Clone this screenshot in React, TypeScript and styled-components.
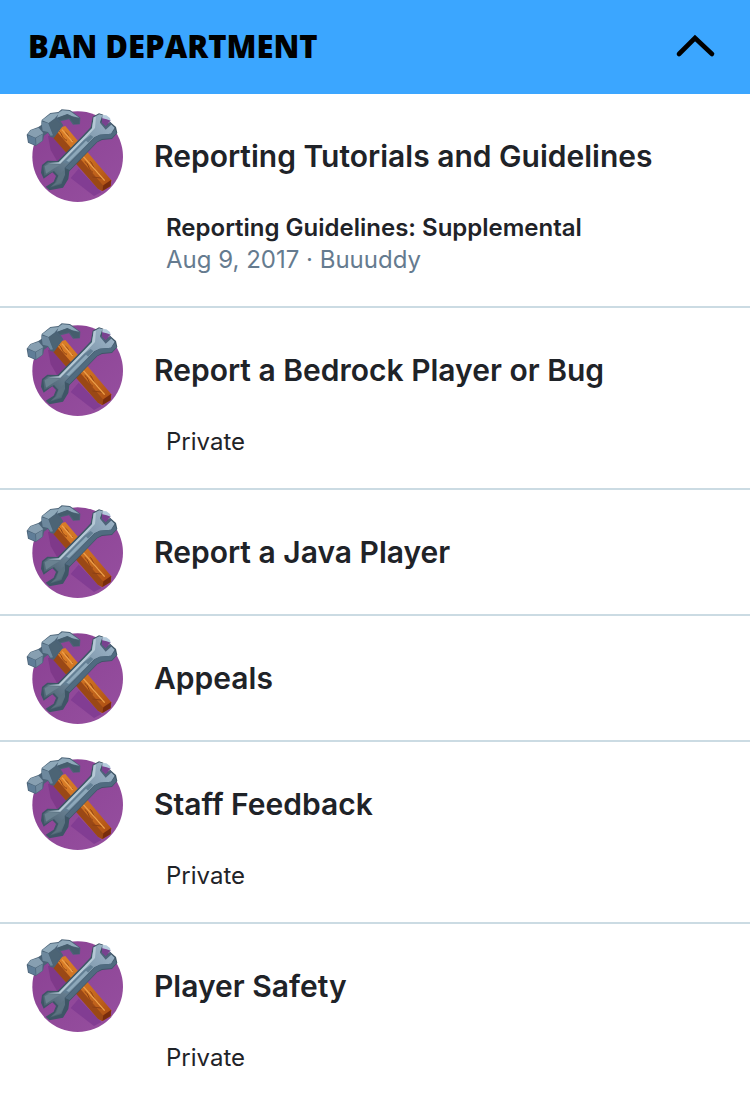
import React, { useState } from "react";
import styled, { createGlobalStyle } from "styled-components";

const GlobalStyle = createGlobalStyle`
  *, *::before, *::after { box-sizing: border-box; }
  body {
    margin: 0;
    background: #fff;
    color: #1f2328;
    font-family: Inter, "Liberation Sans", sans-serif;
  }
`;

const Heading = styled.h2`
  margin: 0;
`;

const HeaderButton = styled.button`
  display: flex;
  align-items: center;
  justify-content: space-between;
  width: 100%;
  height: 94px;
  padding: 0 34px 2px 28px;
  border: 0;
  background: #3ba6ff;
  color: #000;
  font-family: "Open Sans", Inter, sans-serif;
  font-size: 31px;
  font-weight: 800;
  line-height: 36px;
  text-align: left;
  text-transform: uppercase;
  cursor: pointer;
`;

const Chevron = styled.svg<{ $open: boolean }>`
  flex: none;
  transform: ${(p) => (p.$open ? "none" : "rotate(180deg)")};
`;

const List = styled.ul`
  margin: 0;
  padding: 0;
  list-style: none;
`;

const Row = styled.li`
  padding: 14px 26px;
  border-bottom: 2px solid #cbdbe3;

  &:last-child {
    border-bottom: 0;
  }
`;

const RowMain = styled.div`
  display: flex;
  align-items: center;
  gap: 28px;
`;

const Icon = styled.svg`
  flex: none;
`;

const Title = styled.h3`
  margin: 0;
  font-size: 30px;
  font-weight: 600;
  line-height: 40px;
`;

const PlainLink = styled.a`
  color: inherit;
  text-decoration: none;
`;

const Details = styled.div`
  padding: 8px 0 16px 140px;
  font-size: 24px;
  line-height: 32px;
`;

const Latest = styled(PlainLink)`
  display: block;
  font-weight: 600;
`;

const Meta = styled.div`
  color: #657b8f;
`;

type Forum = {
  title: string;
  isPrivate?: boolean;
  latest?: { title: string; date: string; author: string };
};

const forums: Forum[] = [
  {
    title: "Reporting Tutorials and Guidelines",
    latest: {
      title: "Reporting Guidelines: Supplemental",
      date: "Aug 9, 2017",
      author: "Buuuddy",
    },
  },
  { title: "Report a Bedrock Player or Bug", isPrivate: true },
  { title: "Report a Java Player" },
  { title: "Appeals" },
  { title: "Staff Feedback", isPrivate: true },
  { title: "Player Safety", isPrivate: true },
];

function ToolsDefs() {
  return (
    <svg width="0" height="0" style={{ display: "block" }} aria-hidden="true">
      <defs>
        <linearGradient id="disc" x1="0" y1="0" x2="1" y2="1">
          <stop offset="0" stopColor="#8a4193" />
          <stop offset="1" stopColor="#964f9f" />
        </linearGradient>
        <linearGradient id="steel" x1="1" y1="0" x2="0" y2="1">
          <stop offset="0" stopColor="#9fb7ca" />
          <stop offset="0.5" stopColor="#7890a4" />
          <stop offset="1" stopColor="#445a68" />
        </linearGradient>
        <linearGradient id="wood" x1="0" y1="0" x2="1" y2="1">
          <stop offset="0" stopColor="#dc8028" />
          <stop offset="0.6" stopColor="#c96c1f" />
          <stop offset="1" stopColor="#a94a12" />
        </linearGradient>
        <clipPath id="disc-clip">
          <circle cx="173" cy="170" r="136" />
        </clipPath>
      </defs>
    </svg>
  );
}

function ToolsIcon() {
  return (
    <Icon width="100" height="96" viewBox="18 24 300 288" aria-hidden="true">
      <circle cx="173" cy="170" r="136" fill="url(#disc)" />
      <g clipPath="url(#disc-clip)">
        <path d="M84 108 L102 106 L166 186 L128 212 L92 150Z" fill="#7f398a" />
        <path d="M152 234 L176 206 L244 276 L222 288Z" fill="#823d93" />
      </g>

      <path d="M106 88 L136 78 L274 241 L272 258 L247 273 L234 266 L100 112Z" fill="url(#wood)" />
      <path d="M103 96 L110 94 L250 257 L247 273 L234 266 L100 114Z" fill="#9a4816" />
      <path d="M250 256 L273 240 L272 258 L247 273Z" fill="#782c0d" />
      <path
        d="M118 94 C128 103 126 117 141 121 M136 96 C149 105 143 117 159 123 M194 184 C208 193 204 209 219 217 M211 184 C222 196 220 212 236 220 M217 231 L250 235"
        fill="none"
        stroke="#8c4014"
        strokeWidth="3"
      />
      <path d="M126 89 L158 126 M190 170 L254 242" fill="none" stroke="#eea04a" strokeWidth="4" />

      <path
        d="M20 104 L31 90 L55 81 L64 75 L65 60 L91 39 L115 36 L125 28 L150 30 L181 53 L180 73 L159 74 L147 58 L122 64 L130 76 L102 113 L91 111 L84 98 L72 107 L69 122 L47 138 L24 128Z"
        fill="#4b6377"
      />
      <path d="M23 103 L32 91 L56 83 L70 100 L46 113Z" fill="#879fb1" />
      <path d="M23 106 L46 114 L47 136 L26 127Z" fill="#5f7d97" />
      <path d="M48 114 L68 102 L67 122 L49 135Z" fill="#708a9f" />
      <path d="M66 61 L92 41 L118 39 L103 56 L86 69Z" fill="#8ea8b9" />
      <path d="M64 64 L85 70 L99 106 L92 107 L84 96 L68 92Z" fill="#6d889d" />
      <path d="M86 70 L105 57 L124 74 L101 107Z" fill="#4c6475" />
      <path d="M116 38 L127 31 L149 33 L178 53 L157 49 L142 42 L111 53Z" fill="#8fa9ba" />
      <path d="M112 54 L142 43 L158 50 L178 56 L177 71 L162 72 L149 54 L119 61Z" fill="#455d6d" />

      <path
        d="M218 50 L237 40 L250 44 L245 67 L257 79 L270 65 L288 81 L292 99 L276 117 L246 120 L232 127 L148 214 L145 237 L129 263 L88 271 L77 260 L101 245 L108 228 L97 217 L71 236 L63 218 L66 195 L82 182 L113 183 L190 105 L212 82Z"
        fill="#3e5666"
      />
      <path
        d="M221 52 L238 43 L247 46 L240 67 L256 84 L270 70 L284 83 L273 101 L239 104 L223 112 L134 203 L135 224 L124 252 L89 263 L105 248 L115 227 L102 213 L73 228 L70 198 L84 187 L116 188 L193 109 L216 85Z"
        fill="url(#steel)"
      />
      <path d="M221 52 L228 50 L225 84 L202 109 L121 191 L84 190 L116 187 L193 109 L216 85Z" fill="#b4c8d5" />
      <path d="M192 120 L212 105 L220 111 L142 191 L128 187Z" fill="#637f94" />
      <path d="M198 122 L205 128 L147 186 L139 182Z" fill="#8da8ba" />
      <path d="M225 112 L239 104 L273 101 L285 86 L290 99 L275 115 L246 117 L231 125 L149 210 L135 204Z" fill="#506b80" />
      <path d="M240 68 L245 65 L257 79 L271 66 L276 72 L257 89Z" fill="#4e637a" />
      <path d="M246 51 L263 53 L272 62 L257 78 L246 68Z" fill="#78428f" />
      <path d="M247 45 L259 46 L270 54 L272 62 L260 58 L247 55Z" fill="#b5cbdc" />
      <path d="M74 199 L86 192 L119 195 L98 208 L78 221Z" fill="#6a8291" />
      <path d="M117 226 L133 210 L131 231 L121 249 L93 260 L109 247Z" fill="#5b7381" />
    </Icon>
  );
}

export default function App() {
  const [open, setOpen] = useState(true);

  return (
    <main>
      <GlobalStyle />
      <ToolsDefs />
      <Heading>
        <HeaderButton
          type="button"
          aria-expanded={open}
          onClick={() => setOpen(!open)}
        >
          Ban Department
          <Chevron $open={open} width="42" height="24" viewBox="0 0 42 24" aria-hidden="true">
            <path
              d="M5 20 L21 4 L38 20"
              fill="none"
              stroke="currentColor"
              strokeWidth="4.6"
              strokeLinecap="round"
            />
          </Chevron>
        </HeaderButton>
      </Heading>
      {open && (
        <List>
          {forums.map((forum) => (
            <Row key={forum.title}>
              <RowMain>
                <ToolsIcon />
                <Title>
                  <PlainLink href="#">{forum.title}</PlainLink>
                </Title>
              </RowMain>
              {forum.latest && (
                <Details>
                  <Latest href="#">{forum.latest.title}</Latest>
                  <Meta>
                    {forum.latest.date} · {forum.latest.author}
                  </Meta>
                </Details>
              )}
              {forum.isPrivate && <Details>Private</Details>}
            </Row>
          ))}
        </List>
      )}
    </main>
  );
}
